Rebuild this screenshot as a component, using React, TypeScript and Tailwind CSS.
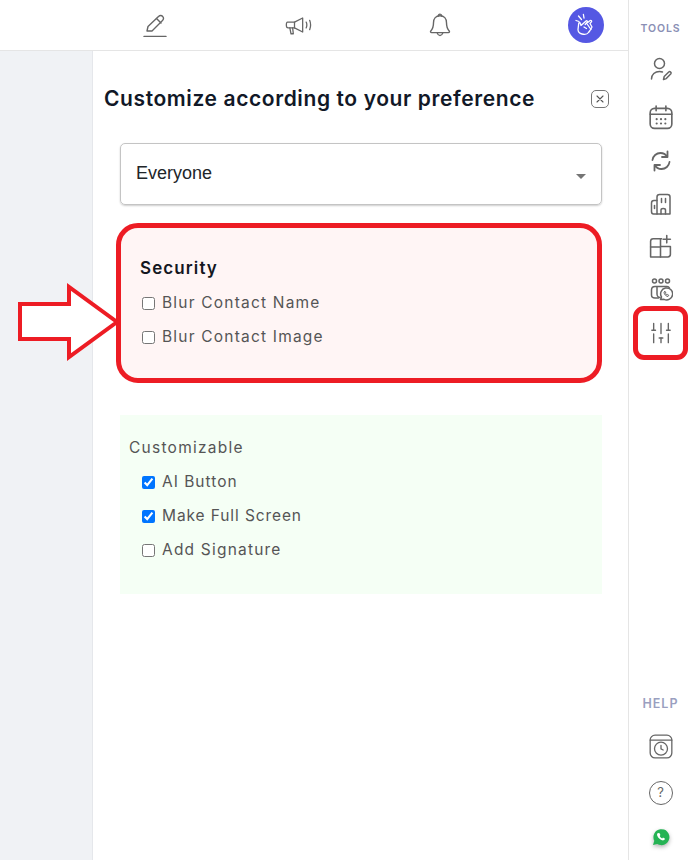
import { ReactNode } from "react";

const FONT = "font-['Inter','Liberation_Sans',sans-serif]";

const Icon = ({ size = 24, width = 1.5, children }: { size?: number; width?: number; children: ReactNode }) => (
  <svg
    width={size}
    height={size}
    viewBox="0 0 24 24"
    fill="none"
    stroke="#666666"
    strokeWidth={width}
    strokeLinecap="round"
    strokeLinejoin="round"
  >
    {children}
  </svg>
);

const CheckRow = ({
  label,
  checked = false,
  tracking = "tracking-[1.2px]",
}: {
  label: string;
  checked?: boolean;
  tracking?: string;
}) => (
  <label className="flex items-center h-[34px]">
    <input type="checkbox" defaultChecked={checked} className="w-[13px] h-[13px] ml-[2px]" />
    <span className={`ml-[7px] text-[15.5px] text-[#555555] ${tracking}`}>{label}</span>
  </label>
);

const SideIcon = ({ children, className = "" }: { children: ReactNode; className?: string }) => (
  <div className={`h-[43px] pl-[4px] flex items-center justify-center ${className}`}>{children}</div>
);

const App = () => {
  return (
    <div className={`relative w-[688px] h-[860px] overflow-hidden bg-white flex ${FONT}`}>
      <div className="w-[628px] flex flex-col">
        <div className="h-[51px] shrink-0 border-b border-[#e5e5e5] flex items-center">
          <div className="w-[110px] shrink-0" />
          <div className="w-[90px] flex justify-center">
            <Icon size={24} width={1.4}>
              <path d="M4 18l1-4.500L15.500 3.500c1.400-1.300 3-1.300 4.200 0 1.200 1.200 1 2.800-.2 4L9 18z" />
              <path d="M13.500 5.500l4.500 4.500" />
              <path d="M1 23.500h22" />
            </Icon>
          </div>
          <div className="w-[53px]" />
          <div className="w-[90px] flex justify-center">
            <Icon size={28} width={1.1}>
              <path d="M3 9.500h6l7-3.500v12l-7-3.500H3.500C2.500 14.500 2 13.500 2 12s.4-2.500 1-2.500z" />
              <path d="M9 9.500v5M5 14.500l1 5h2l-.6-5" />
              <path d="M19 9.500c.7 1.500.7 3.500 0 5M22 8c1 2.500 1 5.500 0 8" />
            </Icon>
          </div>
          <div className="w-[52px]" />
          <div className="w-[90px] flex justify-center">
            <Icon size={26} width={1.3}>
              <path d="M12 3.500c-3.800 0-6 2.800-6 6.500 0 4-1 6-2.500 7.500-.5.600-.2 1.500.7 1.500h15.600c.9 0 1.200-.9.7-1.500C19 16 18 14 18 10c0-3.700-2.200-6.500-6-6.500z" />
              <path d="M10.500 3.700C10.500 2.700 11 2 12 2s1.500.7 1.500 1.700M9.500 19.500c.5 1.500 1.300 2.200 2.500 2.200s2-.7 2.500-2.200" />
            </Icon>
          </div>
          <div className="w-[83px]" />
          <div className="w-[36px] h-[36px] rounded-full bg-[#5558e3] flex items-center justify-center">
            <svg width="26" height="26" viewBox="0 0 26 26" fill="none" stroke="#ffffff" strokeWidth="1.300" strokeLinecap="round" strokeLinejoin="round">
              <path d="M9 22c-2.500-.6-4-2.500-4-4.500l.7-6c.1-1 1.500-1 1.700 0l.6 2 5-4.500c.8-.7 1.900.3 1.200 1.200l-2 2.300 5-4c.9-.6 2 .5 1.200 1.400l-1.400 1.600 2 3.500-2 3.500-1.500 2C14.500 22 12 22.700 9 22z" />
              <path d="M11 15l2.500 1.500M14.500 12.500l3.500 5" />
              <path d="M8.500 7.500L5.500 4M11 6l-.6-3.500M6 9.500L3 8.500" />
            </svg>
          </div>
        </div>
        <div className="flex-1 flex min-h-0">
          <div className="w-[93px] shrink-0 bg-[#f0f2f5] border-r border-[#e5e7eb]" />
          <div className="flex-1 pl-[11px] pt-[34px]">
            <div className="flex items-center h-[28px]">
              <h1 className="w-[487px] text-[21px] leading-7 font-semibold tracking-[0.6px] text-[#111827] whitespace-nowrap">
                Customize according to your preference
              </h1>
              <div className="w-[18px] h-[18px] rounded-[5px] border-[1.5px] border-[#777777] flex items-center justify-center">
                <svg width="8" height="8" viewBox="0 0 8 8" stroke="#555555" strokeWidth="1.100" strokeLinecap="round">
                  <path d="M1 1l6 6M7 1L1 7" />
                </svg>
              </div>
            </div>
            <div className="mt-[30px] ml-[16px] w-[482px] h-[62px] rounded-[5px] border border-[#c4c4c4] shadow-[0_1px_2px_rgba(0,0,0,0.2)] flex items-center justify-between px-[15px] font-['Liberation_Sans',sans-serif]">
              <span className="text-[18px] text-[#212529] -mt-[2px]">Everyone</span>
              <div className="w-0 h-0 mt-[4px] border-l-[5.500px] border-r-[5.500px] border-t-[5.500px] border-l-transparent border-r-transparent border-t-[#757575]" />
            </div>
            <div className="mt-[18px] ml-[12px] w-[486px] h-[160px] rounded-[22px] border-[5px] border-[#ed1c24] bg-[#fff5f5] pl-[19px] pt-[26px]">
              <h2 className="text-[17px] leading-[28px] font-semibold tracking-[1.1px] text-[#14171f]">Security</h2>
              <div className="mt-[4px]">
                <CheckRow label="Blur Contact Name" />
                <CheckRow label="Blur Contact Image" />
              </div>
            </div>
            <div className="mt-[32px] ml-[16px] w-[482px] h-[179px] bg-[#f5fff5] pl-[9px] pt-[20px]">
              <div className="text-[15.5px] leading-[26px] tracking-[1.25px] text-[#555555]">Customizable</div>
              <div className="mt-[4px] pl-[11px]">
                <CheckRow label="AI Button" checked tracking="tracking-[1px]" />
                <CheckRow label="Make Full Screen" checked tracking="tracking-[0.9px]" />
                <CheckRow label="Add Signature" />
              </div>
            </div>
          </div>
        </div>
      </div>
      <div className="w-[60px] border-l border-[#e5e5e5] flex flex-col items-stretch">
        <div className="mt-[22px] h-[13px] pl-[4px] flex items-center justify-center text-[10.5px] font-semibold tracking-[0.9px] text-[#8a8fb5]">
          TOOLS
        </div>
        <div className="mt-[12px]">
          <SideIcon>
            <Icon>
              <circle cx="10.500" cy="6.500" r="5" />
              <path d="M2.500 22c0-4.500 3.500-7.500 8-7.500 1 0 2 .1 3 .5" />
              <path d="M14.500 22.500l.7-3 4.800-4.700c.9-.7 2.800.9 1.900 2l-4.600 4.800z" />
            </Icon>
          </SideIcon>
          <SideIcon className="mt-[5px]">
            <Icon size={26}>
              <rect x="2" y="4" width="20" height="18.500" rx="4" />
              <path d="M2 9.500h20M7.500 1.800v4.400M16.500 1.800v4.400" />
              <path d="M8 14h.01M12 14h.01M16 14h.01M8 18h.01M12 18h.01M16 18h.01" strokeWidth="2" />
            </Icon>
          </SideIcon>
          <SideIcon className="mt-[1px]">
            <Icon size={24} width={1.8}>
              <path d="M3.500 11c.5-4 3.800-7 8-7 2.800 0 5.200 1.400 6.500 3.500" />
              <path d="M18.500 2.500v5.500H13" />
              <path d="M20.500 13c-.5 4-3.800 7-8 7-2.800 0-5.200-1.400-6.500-3.500" />
              <path d="M5.500 21.500V16H11" />
            </Icon>
          </SideIcon>
          <SideIcon>
            <Icon>
              <path d="M8 22V5c0-1.500 1-2.500 2.500-2.500h8C20 2.500 21 3.500 21 5v17H8z" />
              <path d="M8 8.500H5c-1.500 0-2.500 1-2.500 2.500v8.500c0 1.500.8 2.500 2 2.500H8" />
              <path d="M12 22v-4c0-2 4.500-2 4.500 0v4M12.500 6.500v4M16.500 6.500v4" />
              <path d="M5.500 13.500v3" />
            </Icon>
          </SideIcon>
          <SideIcon>
            <Icon size={25}>
              <path d="M13 4.500H5C3.500 4.500 2.500 5.500 2.500 7v15H19c1.500 0 2.500-1 2.500-2.500v-7.500H12V4.500" />
              <path d="M2.500 12.500H12V22" />
              <path d="M18 1.500v7M14.500 5h7" />
            </Icon>
          </SideIcon>
          <SideIcon className="-mt-[1px]">
            <Icon>
              <circle cx="5.500" cy="4" r="2" />
              <circle cx="12" cy="4" r="2" />
              <circle cx="18.500" cy="4" r="2" />
              <path d="M9.500 21H6c-2 0-3.500-1-3.500-3v-5c0-2 1.300-3.500 3.500-3.500h12c1 0 2 .5 2.500 1.500" />
              <path d="M8 10v7c0 2 1.500 3.500 3 3.500" />
              <path d="M11.500 22.500l1-2.500a6 6 0 1 1 2.500 2.300z" />
              <path d="M15 15.500c.2 2 2 3.800 4 4l.8-1.200-1.500-.8-.6.500-1.200-1.300.5-.6-.8-1.500z" strokeWidth="1" />
            </Icon>
          </SideIcon>
          <div className="h-[54px] -mt-[4px] ml-[4px] rounded-[11px] border-[5px] border-[#ed1c24] bg-white flex items-center justify-center">
            <Icon size={22} width={1.5}>
              <path d="M4 1.500v7M4 13v9.500M12 1.500v11M12 17.500v5M20 1.500v7M20 13v9.500" />
              <path d="M2 9h4M10 17.500h4M18 9h4" />
            </Icon>
          </div>
        </div>
        <div className="mt-auto flex flex-col items-center pb-[1px] pl-[4px]">
          <div className="text-[12.5px] leading-4 font-semibold tracking-[1px] text-[#9a9fc0]">HELP</div>
          <div className="h-[46px] w-full mt-[11px] flex items-center justify-center">
            <Icon size={26} width={1.2}>
              <rect x="2" y="2" width="20" height="21" rx="4.500" />
              <path d="M2 6.500h20" />
              <circle cx="12" cy="14.500" r="6" />
              <path d="M12 11.500v3.200l2 1" />
            </Icon>
          </div>
          <div className="h-[48px] w-full flex items-center justify-center">
            <div className="w-[24px] h-[24px] rounded-full border-[1.5px] border-[#666666] flex items-center justify-center text-[13px] text-[#666666]">
              ?
            </div>
          </div>
          <div className="h-[42px] w-full flex items-center justify-center">
            <svg width="18" height="20" viewBox="0 0 18 20" className="drop-shadow-[0_2px_2px_rgba(0,0,0,0.3)]">
              <path d="M1 17l1.300-4.200A8 8 0 1 1 5.300 16z" fill="#25b354" />
              <path d="M6 5c-1 .7-1.200 1.800-.6 3 .9 2 2.500 3.500 4.600 4.300 1.200.4 2.300 0 2.900-1l-.1-.9-1.800-.9-.8.9c-1.100-.4-2-1.300-2.500-2.500l.7-.8L7.600 5.200z" fill="#ffffff" />
            </svg>
          </div>
        </div>
      </div>
      {/* annotation arrow over the page */}
      <svg width="104" height="78" viewBox="0 0 104 78" className="absolute left-[16px] top-[283px]">
        <path d="M4 21h49V4l48 35-48 35V56H4z" fill="#ffffff" stroke="#ed1c24" strokeWidth="4" strokeLinejoin="miter" />
      </svg>
    </div>
  );
};

export default App;
